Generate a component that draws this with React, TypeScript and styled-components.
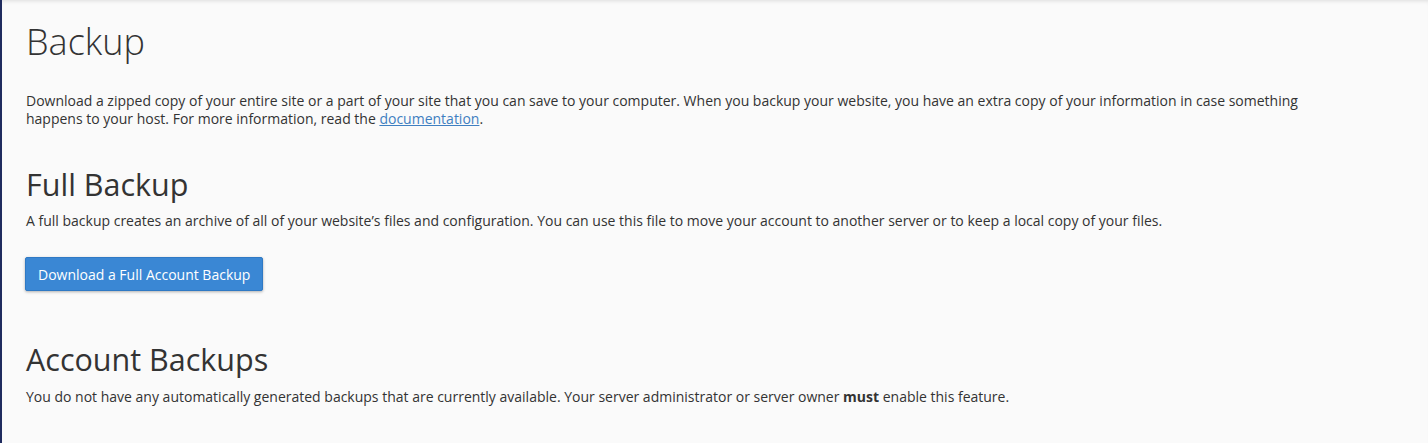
import styled, { createGlobalStyle } from "styled-components";

const GlobalStyle = createGlobalStyle`
  html, body {
    margin: 0;
    padding: 0;
    background: #fafafa;
  }
  body {
    font-family: "Open Sans", "Liberation Sans", sans-serif;
    color: #333;
  }
`;

const Page = styled.main`
  min-height: 443px;
  box-sizing: border-box;
  border-left: 2px solid #1f2b5e;
  padding: 22px 24px 20px;
  box-shadow: inset 0 4px 4px -3px rgba(0, 0, 0, 0.12);
`;

const Title = styled.h1`
  margin: 0;
  font-size: 36px;
  line-height: 1.1;
  font-weight: 300;
  color: #333;
`;

const Section = styled.section<{ $gap?: number }>`
  margin-top: ${(p) => p.$gap ?? 0}px;
`;

const Heading = styled.h2`
  margin: 0 0 11px;
  font-size: 30.5px;
  line-height: 1.1;
  font-weight: 400;
  color: #333;
`;

const Text = styled.p`
  margin: 0;
  max-width: 1290px;
  font-size: 14px;
  line-height: 18px;
  color: #333;

  a {
    color: #3f7fc1;
    text-decoration: underline;
  }
`;

const Button = styled.button`
  margin: 27px 0 0 -1px;
  height: 34px;
  padding: 0 12px;
  border: 1px solid #2f79c4;
  border-radius: 2px;
  background: #3a87d4;
  color: #fff;
  font-family: inherit;
  font-size: 14px;
  box-shadow: 0 1px 3px rgba(0, 0, 0, 0.3);
  cursor: pointer;
`;

export default function App() {
  return (
    <>
      <GlobalStyle />
      <Page>
        <Title>Backup</Title>

        <Section $gap={30}>
          <Text>
            Download a zipped copy of your entire site or a part of your site that you can save to your
            computer. When you backup your website, you have an extra copy of your information in case
            something happens to your host. For more information, read the{" "}
            <a href="#">documentation</a>.
          </Text>
        </Section>

        <Section $gap={40}>
          <Heading>Full Backup</Heading>
          <Text>
            A full backup creates an archive of all of your website’s files and configuration. You can use
            this file to move your account to another server or to keep a local copy of your files.
          </Text>
          <Button>Download a Full Account Backup</Button>
        </Section>

        <Section $gap={52}>
          <Heading>Account Backups</Heading>
          <Text>
            You do not have any automatically generated backups that are currently available. Your server
            administrator or server owner <strong>must</strong> enable this feature.
          </Text>
        </Section>
      </Page>
    </>
  );
}
